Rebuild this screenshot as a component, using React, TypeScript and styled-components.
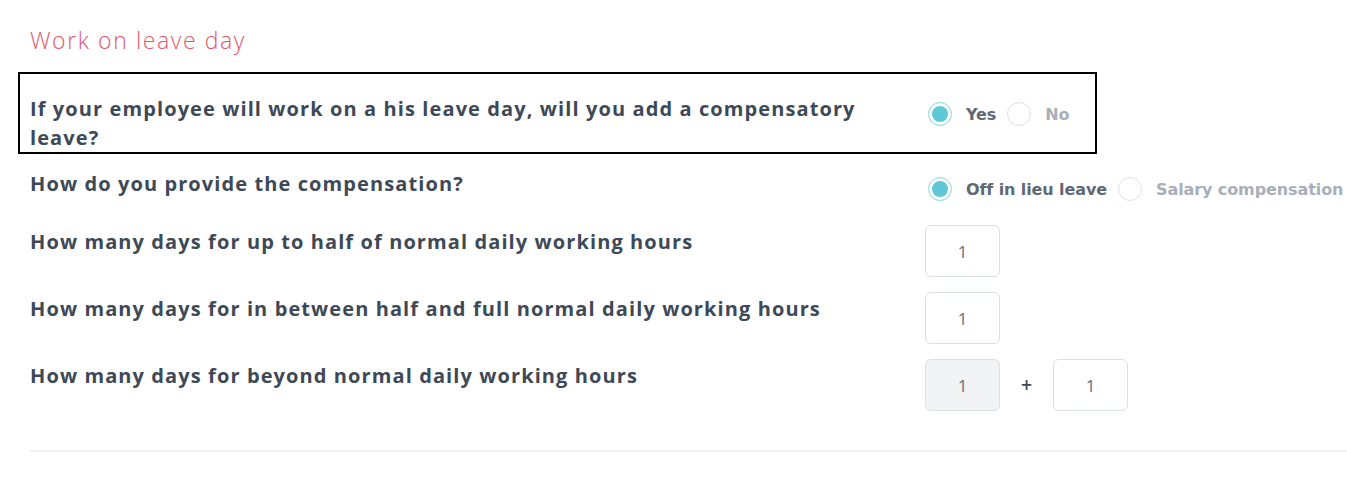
import React, { useState } from "react";
import styled, { createGlobalStyle } from "styled-components";

const GlobalStyle = createGlobalStyle`
  html, body {
    margin: 0;
    padding: 0;
    background: #ffffff;
  }
  body {
    font-family: "Open Sans", "Liberation Sans", sans-serif;
  }
`;

const Page = styled.div`
  width: 1347px;
  padding: 26px 0 0 30px;
  box-sizing: border-box;
`;

const SectionTitle = styled.h2`
  margin: 0 0 18px 0;
  font-family: "Open Sans", sans-serif;
  font-weight: 300;
  font-size: 23px;
  letter-spacing: 1.6px;
  line-height: 28px;
  color: #e4566e;
`;

const Rows = styled.div`
  display: flex;
  flex-direction: column;
  gap: 15px;
`;

// one question with its control column on the right
const Row = styled.div<{ $highlighted?: boolean }>`
  display: grid;
  grid-template-columns: 895px 1fr;
  align-items: start;
  ${(p) =>
    p.$highlighted &&
    `
    width: 1079px;
    box-sizing: border-box;
    margin-left: -12px;
    padding: 20px 0 0 10px;
    border: 2px solid #000;
  `}
`;

const Question = styled.div<{ $offset?: number }>`
  padding-top: ${(p) => p.$offset ?? 0}px;
  padding-right: 40px;
  font-family: "Open Sans", sans-serif;
  font-weight: 700;
  font-size: 20px;
  letter-spacing: 1.1px;
  line-height: 29px;
  color: #3e4957;
`;

const Control = styled.div<{ $offset?: number }>`
  display: flex;
  align-items: center;
  padding-top: ${(p) => p.$offset ?? 0}px;
`;

const RadioGroup = styled.div`
  display: flex;
  align-items: center;
  gap: 8px;
  height: 30px;
  padding-bottom: 6px;
  white-space: nowrap;
`;

const RadioOption = styled.label`
  display: flex;
  align-items: center;
  cursor: pointer;
`;

const RadioCircle = styled.span<{ $checked: boolean }>`
  flex: none;
  width: 24px;
  height: 24px;
  box-sizing: border-box;
  border-radius: 50%;
  border: 1px solid ${(p) => (p.$checked ? "#a6e0ea" : "#dde1e5")};
  background: ${(p) => (p.$checked ? "#5ec7d8" : "#fff")};
  box-shadow: ${(p) => (p.$checked ? "inset 0 0 0 3px #fff" : "none")};
  margin: 0 14px 0 3px;
`;

const RadioText = styled.span<{ $checked: boolean }>`
  font-family: "DejaVu Sans", Verdana, sans-serif;
  font-weight: 700;
  font-size: 16px;
  letter-spacing: -0.1px;
  color: ${(p) => (p.$checked ? "#5f6874" : "#a8afb8")};
`;

const NumberBox = styled.div<{ $disabled?: boolean }>`
  width: 75px;
  height: 52px;
  box-sizing: border-box;
  border: 1px solid #dbe0e4;
  border-radius: 6px;
  background: ${(p) => (p.$disabled ? "#f2f3f4" : "#fff")};
  display: flex;
  align-items: center;
  justify-content: center;
  font-family: "Open Sans", sans-serif;
  font-size: 17px;
  color: #6b6f73;
`;

const Plus = styled.span`
  width: 53px;
  text-align: center;
  font-family: "DejaVu Sans", sans-serif;
  font-weight: 700;
  font-size: 15px;
  color: #444c56;
`;

const Divider = styled.hr`
  margin: 39px 0 0 0;
  border: none;
  border-top: 2px solid #f1f1f1;
`;

interface RadioProps {
  options: string[];
  value: string;
  onChange: (v: string) => void;
}

const Radios = ({ options, value, onChange }: RadioProps) => (
  <RadioGroup>
    {options.map((o) => (
      <RadioOption key={o} onClick={() => onChange(o)}>
        <RadioCircle $checked={value === o} />
        <RadioText $checked={value === o}>{o}</RadioText>
      </RadioOption>
    ))}
  </RadioGroup>
);

const App = () => {
  const [addLeave, setAddLeave] = useState("Yes");
  const [compensation, setCompensation] = useState("Off in lieu leave");

  return (
    <>
      <GlobalStyle />
      <Page>
        <SectionTitle>Work on leave day</SectionTitle>
        <Rows>
          <Row $highlighted>
            <Question>
              If your employee will work on a his leave day, will you add a
              compensatory leave?
            </Question>
            <Control $offset={5}>
              <Radios
                options={["Yes", "No"]}
                value={addLeave}
                onChange={setAddLeave}
              />
            </Control>
          </Row>
          <Row>
            <Question>How do you provide the compensation?</Question>
            <Control $offset={5}>
              <Radios
                options={["Off in lieu leave", "Salary compensation"]}
                value={compensation}
                onChange={setCompensation}
              />
            </Control>
          </Row>
          <Row>
            <Question $offset={2}>
              How many days for up to half of normal daily working hours
            </Question>
            <Control>
              <NumberBox>1</NumberBox>
            </Control>
          </Row>
          <Row>
            <Question $offset={2}>
              How many days for in between half and full normal daily working
              hours
            </Question>
            <Control>
              <NumberBox>1</NumberBox>
            </Control>
          </Row>
          <Row>
            <Question $offset={2}>
              How many days for beyond normal daily working hours
            </Question>
            <Control>
              <NumberBox $disabled>1</NumberBox>
              <Plus>+</Plus>
              <NumberBox>1</NumberBox>
            </Control>
          </Row>
        </Rows>
        <Divider />
      </Page>
    </>
  );
};

export default App;
